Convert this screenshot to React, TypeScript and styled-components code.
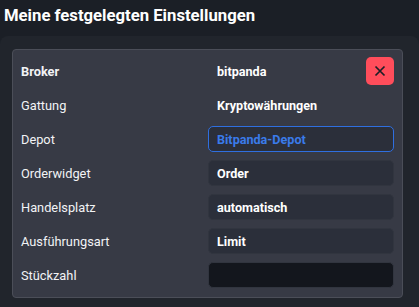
import React from "react";
import styled, { createGlobalStyle } from "styled-components";

const GlobalStyle = createGlobalStyle`
  html, body {
    margin: 0;
    padding: 0;
    background: #1b1f26;
  }
  body {
    font-family: Roboto, "Noto Sans", Arial, sans-serif;
    width: 419px;
    height: 307px;
    overflow: hidden;
  }
`;

interface Row {
  label: string;
  value?: string;
  kind: "plain" | "active" | "field" | "empty";
}

const rows: Row[] = [
  { label: "Gattung", value: "Kryptowährungen", kind: "plain" },
  { label: "Depot", value: "Bitpanda-Depot", kind: "active" },
  { label: "Orderwidget", value: "Order", kind: "field" },
  { label: "Handelsplatz", value: "automatisch", kind: "field" },
  { label: "Ausführungsart", value: "Limit", kind: "field" },
  { label: "Stückzahl", kind: "empty" },
];

function App() {
  return (
    <Page>
      <GlobalStyle />
      <Title>Meine festgelegten Einstellungen</Title>
      <Panel>
        <Card>
          <SettingRow>
            <Label $bold>Broker</Label>
            <BrokerValue>
              <span>bitpanda</span>
              <CloseButton aria-label="Entfernen">
                <svg width="12" height="12" viewBox="0 0 12 12">
                  <path d="M1.5 1.5 L10.5 10.5 M10.5 1.5 L1.5 10.5" stroke="#1b1f26" strokeWidth="1.7" />
                </svg>
              </CloseButton>
            </BrokerValue>
          </SettingRow>
          {rows.map((r) => (
            <SettingRow key={r.label}>
              <Label>{r.label}</Label>
              <Value $kind={r.kind}>{r.value}</Value>
            </SettingRow>
          ))}
        </Card>
      </Panel>
    </Page>
  );
}

const Page = styled.div`
  display: flex;
  flex-direction: column;
  height: 307px;
`;

const Title = styled.h1`
  margin: 0;
  padding: 4px 4px 0;
  height: 32px;
  font-size: 16.7px;
  font-weight: 700;
  color: #ffffff;
  line-height: 24px;
`;

const Panel = styled.div`
  flex: 1;
  background: #21252c;
  border-radius: 8px 8px 0 0;
  padding: 13px 16px 0 12px;
`;

const Card = styled.div`
  background: #373a45;
  border: 1px solid #4b4e58;
  border-radius: 4px;
  padding: 4px 8px 5px 8px;
  display: flex;
  flex-direction: column;
`;

const SettingRow = styled.div`
  display: grid;
  grid-template-columns: 187px 1fr;
  align-items: center;
  height: 34px;
`;

const Label = styled.div<{ $bold?: boolean }>`
  font-size: 12.8px;
  font-weight: ${(p) => (p.$bold ? 700 : 400)};
  color: #f2f3f5;
`;

const BrokerValue = styled.div`
  display: flex;
  align-items: center;
  justify-content: space-between;
  padding-left: 9px;
  font-size: 12.6px;
  font-weight: 700;
  color: #ffffff;
`;

const CloseButton = styled.button`
  width: 28px;
  height: 28px;
  border: none;
  border-radius: 5px;
  background: #ff4d5b;
  display: flex;
  align-items: center;
  justify-content: center;
  padding: 0;
`;

const Value = styled.div<{ $kind: Row["kind"] }>`
  box-sizing: border-box;
  height: 26px;
  display: flex;
  align-items: center;
  padding-left: 8px;
  font-size: 12.6px;
  font-weight: 700;
  border-radius: 5px;
  color: ${(p) => (p.$kind === "active" ? "#3a7bea" : "#ffffff")};
  background: ${(p) =>
    p.$kind === "plain" ? "transparent" : p.$kind === "empty" ? "#13161d" : "#2b2f3a"};
  border: 1px solid
    ${(p) =>
      p.$kind === "active" ? "#2f6fe0" : p.$kind === "plain" ? "transparent" : "#31353f"};
`;

export default App;
